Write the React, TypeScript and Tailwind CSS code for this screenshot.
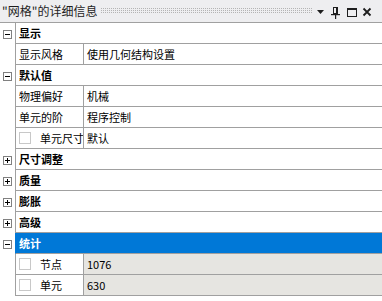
import React from "react";

const font = { fontFamily: '"Noto Sans CJK SC", "Noto Sans", sans-serif' };

function Box({ open }: { open: boolean }) {
  return (
    <div className="w-[9px] h-[9px] border border-[#808080] bg-white relative mt-[1px]">
      <div className="absolute left-[1px] top-[3px] w-[5px] h-[1px] bg-black" />
      {!open && <div className="absolute left-[3px] top-[1px] w-[1px] h-[5px] bg-black" />}
    </div>
  );
}

function Check() {
  return <div className="w-[12px] h-[12px] border border-[#c8c8c8] bg-white shrink-0" />;
}

function Section({ label, open, selected }: { label: string; open: boolean; selected?: boolean }) {
  return (
    <div className="flex h-[21px]">
      <div className="w-[15px] flex items-center justify-start pl-[3px] bg-white">
        <Box open={open} />
      </div>
      <div
        className={
          "flex-1 border-l border-b border-[#a0a0a0] flex items-center pl-[3px] font-bold text-[11px] whitespace-nowrap " +
          (selected ? "bg-[#0078d7] text-white border-l-[#0078d7]" : "bg-white text-black")
        }
      >
        {label}
      </div>
    </div>
  );
}

function Prop({ name, value, check, gray }: { name: string; value: string; check?: boolean; gray?: boolean }) {
  return (
    <div className="flex h-[21px]">
      <div className="w-[15px] bg-white" />
      <div className="flex-1 flex border-l border-b border-[#a0a0a0] text-[11px] text-black whitespace-nowrap">
        <div className="w-[68px] border-r border-[#a0a0a0] flex items-center bg-white pl-[3px] overflow-hidden">
          {check && (
            <>
              <Check />
              <span className="ml-[9px]">{name}</span>
            </>
          )}
          {!check && name}
        </div>
        <div className={"flex-1 flex items-center pl-[3px] " + (gray ? "bg-[#e6e5e1]" : "bg-white")}>{value}</div>
      </div>
    </div>
  );
}

export default function App() {
  return (
    <div className="w-[382px] h-[301px] bg-white overflow-hidden text-black" style={font}>
      <div className="h-[23px] bg-[#eeeef0] border-b border-[#a0a0a0] flex items-center">
        <span className="pl-[2px] text-[12px] text-[#1e1e1e] whitespace-nowrap">"网格"的详细信息</span>
        <svg className="ml-[4px]" width="212" height="6">
          <defs>
            <pattern id="dots" width="2" height="2" patternUnits="userSpaceOnUse">
              <rect x="0" y="0" width="1" height="1" fill="#b4b4b4" />
            </pattern>
          </defs>
          <rect x="0" y="0" width="212" height="6" fill="url(#dots)" />
        </svg>
        <svg className="ml-[2px]" width="60" height="22" viewBox="0 0 60 22">
          <polygon points="2,10 9,10 5.5,14" fill="#1e1e1e" />
          <rect x="18.5" y="7.5" width="4" height="6" fill="none" stroke="#1e1e1e" strokeWidth="1" />
          <rect x="21" y="8" width="1" height="5" fill="#1e1e1e" />
          <rect x="16" y="14" width="9" height="1.2" fill="#1e1e1e" />
          <rect x="20" y="15" width="1.2" height="4" fill="#1e1e1e" />
          <rect x="32.5" y="8.5" width="9" height="8" fill="none" stroke="#1e1e1e" strokeWidth="1" />
          <rect x="32" y="8" width="10" height="2" fill="#1e1e1e" />
          <path d="M48.5 8.5 L55.5 15.5 M55.5 8.5 L48.5 15.5" stroke="#1e1e1e" strokeWidth="1.8" />
        </svg>
      </div>
      <Section label="显示" open />
      <Prop name="显示风格" value="使用几何结构设置" />
      <Section label="默认值" open />
      <Prop name="物理偏好" value="机械" />
      <Prop name="单元的阶" value="程序控制" />
      <Prop name="单元尺寸" value="默认" check />
      <Section label="尺寸调整" open={false} />
      <Section label="质量" open={false} />
      <Section label="膨胀" open={false} />
      <Section label="高级" open={false} />
      <Section label="统计" open selected />
      <Prop name="节点" value="1076" check gray />
      <Prop name="单元" value="630" check gray />
    </div>
  );
}
